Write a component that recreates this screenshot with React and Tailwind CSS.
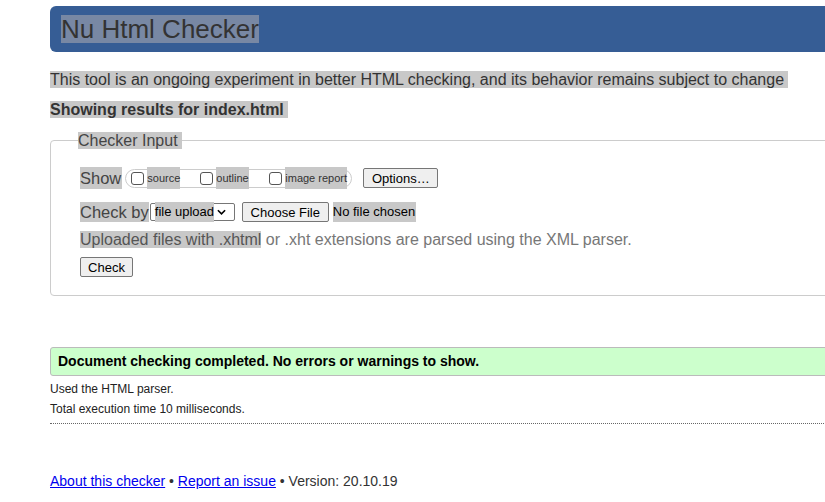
export default function App() {
  const sel = "bg-[#c8c8c8]";
  const box = "shrink-0 w-[13px] h-[13px] border border-[#555] rounded-[3px] bg-white";
  const lbl = `${sel} shrink-0 whitespace-nowrap text-[11px] leading-[22px] text-[#333]`;
  return (
    <div className="w-[825px] h-[502px] overflow-hidden bg-white font-['Liberation_Sans',Arial,sans-serif] text-[#333]">
      <div className="pl-[50px] pt-[6px] w-[900px]">
        {/* header */}
        <div className="h-[46px] w-[850px] rounded-l-[6px] bg-[#365d95] flex items-center pl-[11px]">
          <h1 className="text-[26px] leading-[28px] bg-[#7888a4] text-[#333] px-0">Nu Html Checker</h1>
        </div>

        <p className="mt-[19px] text-[16px] leading-[18px]">
          <span className={sel}>This tool is an ongoing experiment in better HTML checking, and its behavior remains subject to change&nbsp;</span>
        </p>
        <p className="mt-[12px] text-[16px] leading-[18px] font-bold">
          <span className={sel}>Showing results for index.html&nbsp;</span>
        </p>

        {/* fieldset */}
        <div className="relative mt-[21px] w-[800px] h-[156px] border border-[#ccc] rounded-[4px] pl-[29px] pt-[26px]">
          <div className="absolute left-[27px] -top-[9px] bg-white text-[16px] leading-[18px] text-[#444]">
            <span className={sel}>Checker Input&nbsp;</span>
          </div>

          <div className="flex items-center h-[22px]">
            <span className={`${sel} text-[16.5px] leading-[22px] text-[#444] pr-[1px]`}>Show</span>
            <div className="ml-[3px] flex items-center h-[19px] w-[227px] shrink-0 border border-[#ccc] rounded-full pl-[5px]">
              <span className={box}></span>
              <span className={`${lbl} ml-[3px] w-[33px]`}>source</span>
              <span className={`${box} ml-[20px]`}></span>
              <span className={`${lbl} ml-[3px] w-[33px]`}>outline</span>
              <span className={`${box} ml-[20px]`}></span>
              <span className={`${lbl} ml-[3px]`}>image report</span>
            </div>
            <button className="ml-[11px] h-[20px] w-[75px] shrink-0 border border-[#767676] rounded-[2px] bg-[#efefef] text-[13px] text-black">
              Options…
            </button>
          </div>

          <div className="flex items-center mt-[13px] h-[20px]">
            <span className={`${sel} text-[16.5px] leading-[20px] text-[#444]`}>Check by</span>
            <div className="ml-[1px] h-[18px] w-[85px] border border-[#767676] rounded-[2px] flex items-center pl-[4px] text-[13px] text-black">
              <span className={sel}>file upload</span>
              <svg width="9" height="6" viewBox="0 0 10 6" className="ml-[3px]">
                <path d="M1 1l4 4 4-4" stroke="black" strokeWidth="1.8" fill="none" />
              </svg>
            </div>
            <button className="ml-[7px] h-[20px] w-[87px] border border-[#767676] rounded-[2px] bg-[#efefef] text-[13px] text-black">
              Choose File
            </button>
            <span className={`${sel} ml-[4px] text-[13px] leading-[20px] text-black pr-[1px]`}>No file chosen</span>
          </div>

          <p className="mt-[9px] text-[16px] leading-[18px] text-[#777]">
            <span className={`${sel} text-[#555]`}>Uploaded files with .xhtml</span> or .xht extensions are parsed using the XML parser.
          </p>

          <button className="mt-[8px] h-[20px] w-[53px] border border-[#767676] rounded-[2px] bg-[#efefef] text-[13px] text-black">
            Check
          </button>
        </div>

        {/* result */}
        <div className="mt-[51px] w-[800px] h-[29px] border border-[#bbb] rounded-[3px] bg-[#ccffcc] flex items-center pl-[7px]">
          <span className="font-bold text-[14px] text-black">Document checking completed. No errors or warnings to show.</span>
        </div>
        <p className="mt-[5px] text-[12px] leading-[16px] text-[#222]">Used the HTML parser.</p>
        <p className="mt-[4px] text-[12px] leading-[16px] text-[#222]">Total execution time 10 milliseconds.</p>
        <div className="mt-[6px] w-[800px] border-t border-dotted border-[#666]"></div>

        {/* footer */}
        <p className="mt-[49px] text-[14px] leading-[16px] text-[#333]">
          <a href="#" className="text-[#0000ee] underline">About this checker</a> • <a href="#" className="text-[#0000ee] underline">Report an issue</a> • Version: 20.10.19
        </p>
      </div>
    </div>
  );
}
